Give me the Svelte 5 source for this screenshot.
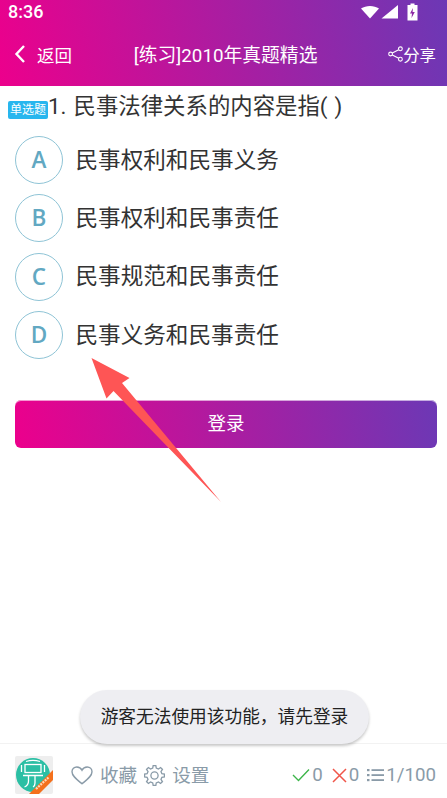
<script>
  const options = [
    { key: 'A', text: '民事权利和民事义务' },
    { key: 'B', text: '民事权利和民事责任' },
    { key: 'C', text: '民事规范和民事责任' },
    { key: 'D', text: '民事义务和民事责任' }
  ];

  // 8 tooth cog outline for the settings icon
  function gearPath(cx, cy, outer, inner, teeth) {
    const pts = [];
    const step = (Math.PI * 2) / teeth;
    for (let i = 0; i < teeth; i++) {
      const a = i * step;
      const p = (r, d) => `${(cx + r * Math.cos(a + d)).toFixed(2)} ${(cy + r * Math.sin(a + d)).toFixed(2)}`;
      pts.push(p(outer, -step * 0.17), p(outer, step * 0.17), p(inner, step * 0.3), p(inner, step * 0.7));
    }
    return 'M' + pts.join(' L') + ' Z';
  }
</script>

<div class="page">
  <header class="top">
    <div class="status">
      <span class="time">8:36</span>
      <span class="status-icons">
        <svg width="37" height="14" viewBox="0 0 37 14"><path d="M0 3.6 C5 0 13 0 18 3.6 L9 13.5 Z" fill="#fff"/><path d="M20.5 13.5 L37 0 V13.5 Z" fill="#fff"/></svg>
        <svg class="battery" width="11" height="18" viewBox="0 0 11 18"><path d="M3.5 0.5 H7.5 V2 H10.5 V17.5 H0.5 V2 H3.5 Z" fill="#fff"/><path d="M6 5 L3 10.5 H5 L4.5 15 L7.8 9 H5.6 Z" fill="#8d2aa5"/></svg>
      </span>
    </div>
    <nav class="bar">
      <div class="back">
        <svg width="12" height="20" viewBox="0 0 12 20" fill="none"><path d="M10 2 L2.5 10 L10 18" stroke="#fff" stroke-width="2.4"/></svg>
        <span>返回</span>
      </div>
      <div class="title">[练习]2010年真题精选</div>
      <div class="share">
        <svg width="15" height="16" viewBox="0 0 15 16" fill="none" stroke="#fff" stroke-width="1.1"><circle cx="12.4" cy="2.8" r="1.9"/><circle cx="2.6" cy="8" r="1.9"/><circle cx="12.4" cy="13.2" r="1.9"/><path d="M4.3 7.1 L10.7 3.7 M4.3 8.9 L10.7 12.3"/></svg>
        <span>分享</span>
      </div>
    </nav>
  </header>

  <main class="content">
    <div class="question"><span class="tag">单选题</span><span class="q-text">1. 民事法律关系的内容是指( )</span></div>
    <ul class="options">
      {#each options as opt}
        <li class="option">
          <span class="circle">{opt.key}</span>
          <span class="opt-text">{opt.text}</span>
        </li>
      {/each}
    </ul>
    <button class="login"><span>登录</span></button>
  </main>

  <footer class="bottom">
    <svg class="logo" width="38" height="38" viewBox="0 0 38 38">
      <rect width="38" height="38" rx="2" fill="#eeeeee"/>
      <circle cx="18" cy="19" r="17" fill="#2bbfa4"/>
      <g fill="none" stroke="#fff" stroke-width="1.3">
        <path d="M11 5.5 C15 4.3 21 4.3 25 5.5"/>
        <rect x="10" y="8.5" width="16" height="8"/>
        <path d="M6.5 9 V16 M29.5 9 V16"/>
        <path d="M8 19.5 H28 M13.5 20 V25 C13.5 28 12 30 9.5 31 M20 20 V27 C20 29 20 30 18 31"/>
      </g>
      <path d="M38 14 V24 L24 38 H14 Z" fill="#f4701c"/>
      <path d="M21 33 L34 21" stroke="#ffd9b8" stroke-width="2.2" stroke-dasharray="2 1"/>
    </svg>
    <div class="action">
      <svg width="22" height="19" viewBox="0 0 22 19" fill="none" stroke="#8a9ba8" stroke-width="1.4"><path d="M11 17.8 C5.5 13.2 1 10 1 5.8 C1 3 3.2 1 5.8 1 C8 1 10 2.2 11 4.2 C12 2.2 14 1 16.2 1 C18.8 1 21 3 21 5.8 C21 10 16.5 13.2 11 17.8 Z"/></svg>
      <span class="action-label">收藏</span>
    </div>
    <div class="action">
      <svg width="21" height="21" viewBox="0 0 21 21" fill="none" stroke="#8a9ba8" stroke-width="1.3"><path d={gearPath(10.5, 10.5, 10, 7.6, 8)}/><circle cx="10.5" cy="10.5" r="3.6"/></svg>
      <span class="action-label">设置</span>
    </div>
    <div class="stats">
      <svg width="18" height="14" viewBox="0 0 18 14" fill="none"><path d="M1 7 L6.5 12.5 L17 1.5" stroke="#3db54a" stroke-width="1.4"/></svg>
      <span class="num">0</span>
      <svg class="gap" width="15" height="15" viewBox="0 0 15 15" fill="none"><path d="M1 1 L14 14 M14 1 L1 14" stroke="#f0564a" stroke-width="1.5"/></svg>
      <span class="num">0</span>
      <svg class="gap tight" width="17" height="14" viewBox="0 0 17 14" fill="#8a9ba8"><rect x="0" y="1" width="2.5" height="2.2"/><rect x="0" y="6" width="2.5" height="2.2"/><rect x="0" y="11" width="2.5" height="2.2"/><rect x="4.5" y="1.2" width="12.5" height="1.8"/><rect x="4.5" y="6.2" width="12.5" height="1.8"/><rect x="4.5" y="11.2" width="12.5" height="1.8"/></svg>
      <span class="num">1/100</span>
    </div>
  </footer>

  <div class="toast">游客无法使用该功能，请先登录</div>

  <!-- red annotation arrow over the page -->
  <svg class="arrow" width="447" height="798" viewBox="0 0 447 798"><path d="M91.5 358 L129.5 378 L122 383 L221 502 L113.5 391 L106.5 398.5 Z" fill="#fe5555"/></svg>
</div>

<style>
  :global(body) {
    margin: 0;
    background: #fff;
  }
  .page {
    position: relative;
    width: 447px;
    height: 798px;
    overflow: hidden;
    display: flex;
    flex-direction: column;
    background: #fff;
    font-family: Roboto, "Noto Sans CJK SC", sans-serif;
    color: #333;
  }
  .top {
    height: 86px;
    background: linear-gradient(78deg, #ec008c 0%, #6c38b5 100%);
    color: #fff;
    flex: none;
  }
  .status {
    height: 24px;
    display: flex;
    align-items: center;
    justify-content: space-between;
    padding: 0 29px 0 8px;
  }
  .time {
    font-size: 18px;
    font-weight: 500;
    line-height: 22px;
  }
  .status-icons {
    display: flex;
    align-items: center;
    gap: 9px;
  }
  .battery {
    display: block;
  }
  .bar {
    height: 60px;
    display: flex;
    align-items: center;
    padding: 0 11px 0 14px;
  }
  .back {
    display: flex;
    align-items: center;
    gap: 11px;
    font-size: 17.5px;
  }
  .title {
    flex: 1;
    text-align: center;
    font-size: 18.8px;
    margin-right: 9px;
    padding-bottom: 1px;
  }
  .share {
    display: flex;
    align-items: center;
    gap: 0;
    font-size: 16.4px;
  }
  .content {
    flex: 1;
    min-height: 0;
  }
  .question {
    display: flex;
    align-items: center;
    height: 38px;
    padding-left: 8px;
    font-size: 22.4px;
    word-spacing: 1.5px;
  }
  .q-text {
    padding-bottom: 3px;
  }
  .tag {
    width: 40px;
    height: 18px;
    margin-top: 9px;
    background: #28b6ee;
    color: #fff;
    font-size: 12px;
    line-height: 18px;
    text-align: center;
    border-radius: 2px;
    flex: none;
  }
  .options {
    list-style: none;
    margin: 0;
    padding: 7px 0 0 15px;
  }
  .option {
    display: flex;
    align-items: center;
    height: 58.3px;
  }
  .circle {
    box-sizing: border-box;
    width: 48px;
    height: 48px;
    padding-bottom: 1px;
    border: 1px solid #8fc4d6;
    border-radius: 50%;
    display: flex;
    align-items: center;
    justify-content: center;
    font-family: "Open Sans", sans-serif;
    font-size: 22.5px;
    font-weight: 600;
    color: #62a8c2;
    flex: none;
  }
  .opt-text {
    margin-left: 12.5px;
    padding-bottom: 4px;
    font-size: 22.6px;
  }
  .login {
    display: block;
    width: 422px;
    height: 48px;
    margin: 36px 0 0 15px;
    border: none;
    border-radius: 6px;
    background: linear-gradient(80deg, #ec008c 0%, #6c38b5 100%);
    box-shadow: inset 0 1px 0 rgba(255, 255, 255, 0.6);
    color: #fff;
    font-family: inherit;
    font-size: 18.5px;
    padding: 0 0 4px;
  }
  .bottom {
    box-sizing: border-box;
    height: 55px;
    border-top: 1px solid #f2f2f2;
    display: flex;
    align-items: center;
    padding: 8px 11px 0 15px;
    color: #8a9ba8;
    flex: none;
  }
  .logo {
    margin-right: 18px;
    flex: none;
  }
  .action {
    display: flex;
    align-items: center;
    gap: 7px;
    font-size: 18.6px;
    margin-right: 7px;
  }
  .action-label {
    padding-bottom: 3px;
  }
  .stats {
    margin-left: auto;
    display: flex;
    align-items: center;
    font-size: 18.7px;
  }
  .num {
    margin-left: 2px;
  }
  .gap {
    margin-left: 9px;
  }
  .gap.tight {
    margin-left: 8px;
  }
  .toast {
    position: absolute;
    left: 80px;
    top: 690px;
    width: 289px;
    height: 54px;
    border-radius: 27px;
    background: #eeeef2;
    box-shadow: 0 2px 3px rgba(0, 0, 0, 0.22);
    font-size: 17.7px;
    line-height: 54px;
    text-align: center;
    color: #222;
  }
  .arrow {
    position: absolute;
    left: 0;
    top: 0;
    pointer-events: none;
  }
</style>
